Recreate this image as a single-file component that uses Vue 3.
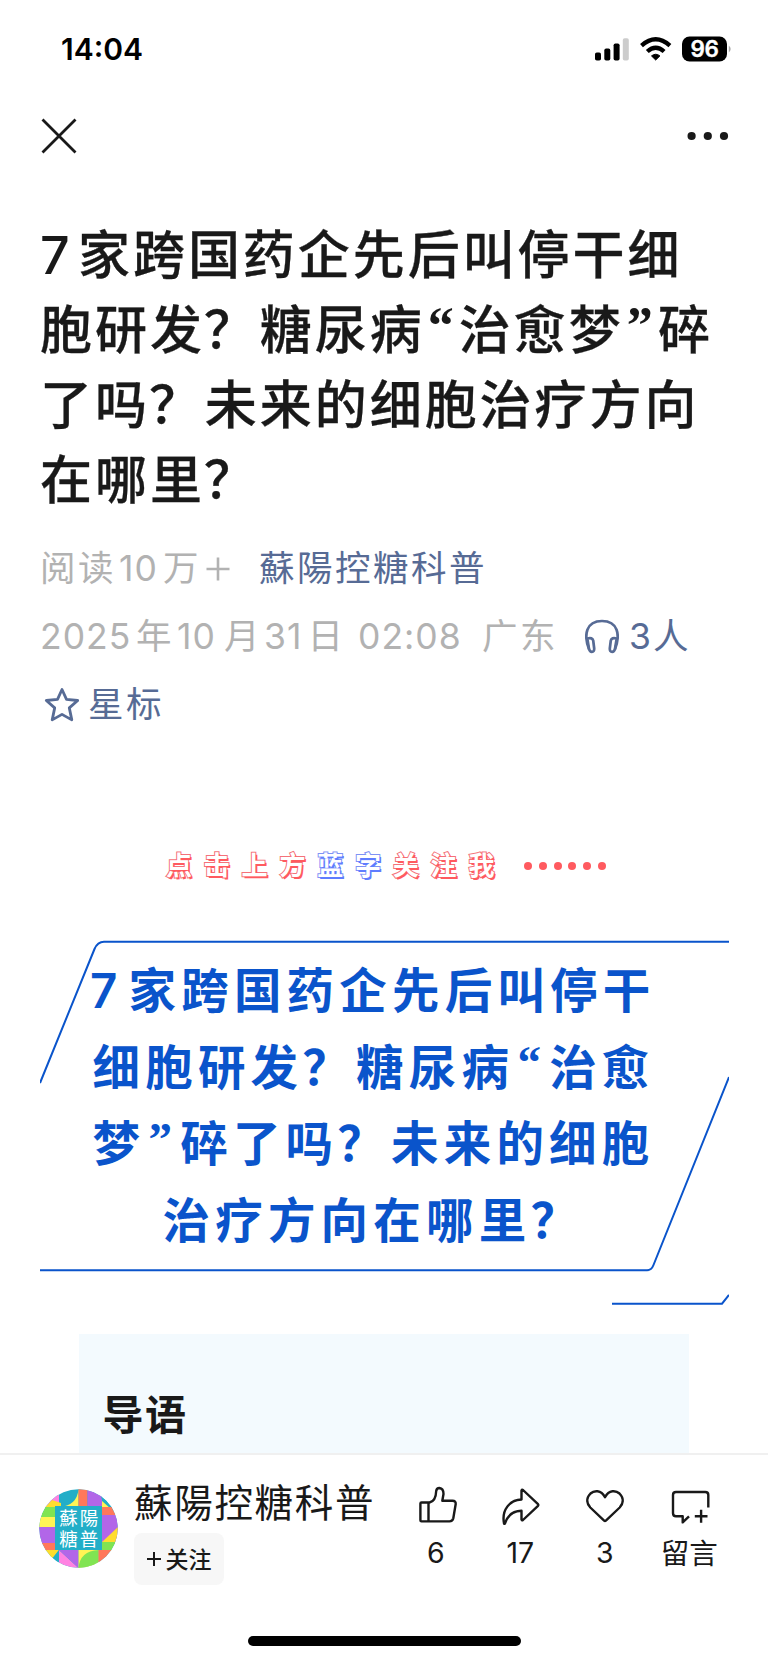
<script setup>
const titleLines = [
  ['7', '家跨国药企先后叫停干细'],
  ['胞研发', '？', '糖尿病', '“', '治愈梦', '”', '碎'],
  ['了吗', '？', '未来的细胞治疗方向'],
  ['在哪里', '？'],
]
const bannerLines = [
  ['7', '家跨国药企先后叫停干'],
  ['细胞研发', '？', '糖尿病', '“', '治愈'],
  ['梦', '”', '碎了吗', '？', '未来的细胞'],
  ['治疗方向在哪里', '？'],
]
const kinds = { '7': 'num', '“': 'quote', '”': 'quote', '？': 'ask' }
const kind = (t) => kinds[t] || 'han'
const followChars = [...'点击上方蓝字关注我']
</script>

<template>
  <div class="page">
    <header class="status">
      <span class="time">14:04</span>
      <svg class="status-icons" width="140" height="30" viewBox="0 0 140 30">
        <rect x="4" y="17.500" width="6" height="8" rx="1.800" />
        <rect x="13.300" y="13.600" width="6" height="11.900" rx="1.800" />
        <rect x="22.600" y="8.400" width="6" height="17.100" rx="1.800" />
        <rect x="31.800" y="3.200" width="6" height="22.300" rx="1.800" fill="#ccc" />
        <g transform="translate(4.700 0)">
          <path d="M60 25 L55.800 20.900 Q60 17.600 64.200 20.900Z" stroke="#000" stroke-width="1" stroke-linejoin="round" />
          <path d="M51.600 16.500 Q60 8.900 68.400 16.500" class="wave" />
          <path d="M45.800 10.600 Q60 -1.900 74.200 10.600" class="wave" />
        </g>
        <rect x="91" y="1.500" width="45" height="25" rx="7.500" />
        <path d="M137.800 10.500 Q141.600 14 137.800 17.500Z" fill="#aaa" />
        <text x="113.500" y="22" text-anchor="middle" class="battery">96</text>
      </svg>
    </header>

    <nav class="nav">
      <svg width="38" height="38" viewBox="0 0 38 38"><path d="M2.500 2.500 L35.500 35.500 M35.500 2.500 L2.500 35.500" stroke="#191919" stroke-width="2.800" /></svg>
      <svg width="42" height="10" viewBox="0 0 42 10" fill="#191919"><circle cx="4.600" cy="5" r="4.100" /><circle cx="20.800" cy="5" r="4.100" /><circle cx="37" cy="5" r="4.100" /></svg>
    </nav>

    <h1 class="title">
      <span v-for="(line, i) in titleLines" :key="i" class="row"><span v-for="(t, j) in line" :key="j" :class="kind(t)">{{ t }}</span></span>
    </h1>

    <section class="meta">
      <div class="row"><span class="m-read">阅读</span><span class="m-ten">10</span><span class="m-wan">万</span><svg class="plus" width="26" height="26" viewBox="0 0 26 26"><path d="M1.500 13H24.500M13 1.500V24.500" stroke="#b2b2b2" stroke-width="2.600" /></svg><span class="link">蘇陽控糖科普</span></div>
      <div class="row">
        <span class="m-year">2025</span><span class="m-nian">年</span><span class="m-month">10</span><span class="m-yue">月</span><span class="m-day">31</span><span class="m-ri">日</span><span class="m-time">02:08</span><span class="m-place">广东</span>
        <svg class="phones" width="34" height="36" viewBox="0 0 34 36" fill="none" stroke="#576b95" stroke-width="2.700" stroke-linejoin="round">
          <path d="M4 30 C-1.500 16 1 2 17 2 S35.500 16 30 30" />
          <path d="M2.300 19.500 Q7.500 18.200 8.200 21.500 L9.200 29.500 Q9.400 32.700 6.800 32.800 Q4.900 32.700 4 30 Z" />
          <path d="M31.700 19.500 Q26.500 18.200 25.800 21.500 L24.800 29.500 Q24.600 32.700 27.200 32.800 Q29.100 32.700 30 30 Z" />
        </svg>
        <span class="link m-three">3</span><span class="link">人</span>
      </div>
      <div class="row">
        <svg class="star" width="36" height="36" viewBox="0 0 36 36"><path d="M18 2.500 L22.500 12.300 L33.700 13.500 L25.300 20.900 L27.800 32.900 L18 27.400 L8.200 32.900 L10.700 20.900 L2.300 13.500 L13.500 12.300 Z" fill="none" stroke="#576b95" stroke-width="2.800" stroke-linejoin="round" /></svg>
        <span class="link">星标</span>
      </div>
    </section>

    <section class="follow">
      <span v-for="(c, i) in followChars" :key="i" class="toy" :class="{ blue: c === '蓝' || c === '字' }">{{ c }}</span>
      <i v-for="n in 6" :key="'d' + n" class="dot"></i>
    </section>

    <section class="banner">
      <svg class="frame" width="689" height="366" viewBox="0 0 689 366" fill="none" stroke="#0a54cb" stroke-width="2">
        <path d="M0 143 L54.500 9 Q57.500 1.700 64 1.700 H689" />
        <path d="M0 330.300 H607 Q611.500 330.300 613.500 325 L689 137" />
        <path d="M572 363.700 H682 L689 355" />
      </svg>
      <div class="banner-text">
        <span v-for="(line, i) in bannerLines" :key="i" class="row"><span v-for="(t, j) in line" :key="j" :class="kind(t)">{{ t }}</span></span>
      </div>
    </section>

    <section class="intro"><h2>导语</h2></section>

    <footer class="bar">
      <svg class="avatar" width="79" height="79" viewBox="0 0 79 79">
        <defs><clipPath id="disc"><circle cx="39.500" cy="39.500" r="39.200" /></clipPath></defs>
        <g clip-path="url(#disc)">
          <rect width="79" height="79" fill="#22aec8" />
          <path d="M0 0H20V18H0Z" fill="#ff82e2" /><path d="M13 11L0 24V18H22V14Z" fill="#ffdd2e" />
          <path d="M20 18Q38 17 39.500 0V18Z" fill="#fff455" />
          <rect x="39.500" width="9" height="18" fill="#ff785a" /><rect x="48.500" width="14.500" height="18" fill="#b266e8" />
          <path d="M60 0L79 22H66Z" fill="#22aec8" /><path d="M63 12L72 20H63Z" fill="#fff455" />
          <rect y="18" width="17" height="10" fill="#80e452" /><rect y="28" width="17" height="10" fill="#fff455" />
          <rect y="38" width="17" height="16" fill="#b266e8" /><rect y="54" width="17" height="7" fill="#ff785a" />
          <rect x="63" y="18" width="16" height="8" fill="#ff785a" /><rect x="63" y="26" width="16" height="27" fill="#b266e8" />
          <path d="M79 38V53H63Z" fill="#ffdd2e" /><rect x="63" y="53" width="16" height="9" fill="#80e452" />
          <path d="M0 61H20L6 79H0Z" fill="#ffdd2e" /><path d="M20 61V79H6Z" fill="#22aec8" />
          <path d="M20 61V79H39.500Z" fill="#ff82e2" /><path d="M20 61H39.500V79Z" fill="#b266e8" />
          <rect x="39.500" y="61" width="20" height="18" fill="#fff455" /><path d="M39.500 79Q41 62 59.500 61V79Z" fill="#80e452" />
          <path d="M59.500 61H79L59.500 79Z" fill="#ff785a" />
          <rect x="16" y="17" width="47" height="44" fill="#22aec8" />
          <text x="20.300" y="36.300" textLength="39">蘇陽</text><text x="20.300" y="57" textLength="39">糖普</text>
        </g>
      </svg>
      <div class="who">
        <div class="name">蘇陽控糖科普</div>
        <div class="btn"><svg width="14" height="14" viewBox="0 0 14 14"><path d="M0 7H14M7 0V14" stroke="#191919" stroke-width="2" /></svg><span>关注</span></div>
      </div>
      <div class="acts">
        <div class="act thumb">
          <svg width="40" height="40" viewBox="0 0 40 40"><path d="M3.500 17.500 H11.500 C17 16.500 18 11 18.200 6 Q18.600 3 21.400 3 Q25.500 3.400 25.500 9 L24.300 15.800 H34.500 Q38 16 37.700 19 L35.300 33.300 Q34.600 36.400 31.500 36.400 H3.500 Q2.400 36.400 2.400 35.300 V18.600 Q2.400 17.500 3.500 17.500 Z M10.500 17.500 V36.400" /></svg>
          <span>6</span>
        </div>
        <div class="act share">
          <svg width="40" height="40" viewBox="0 0 40 40"><path d="M20.500 14.500 V5.400 Q21 4.300 22 5 L37 19.200 Q37.600 20 37 20.800 L22 35 Q20.800 35.800 20.500 34.500 V25.800 C11 26 6.500 30.500 4 38.500 Q3.300 39.300 3 38.300 C0.500 25 8.500 15 20.500 14.500 Z" /></svg>
          <span>17</span>
        </div>
        <div class="act">
          <svg width="40" height="40" viewBox="0 0 40 40"><path d="M20 12.200 C24 4.500 31 5.300 34.500 8.500 C39.500 13.500 38 19 34.700 22.500 L20.900 35.600 Q20 36.300 19.100 35.600 L5.300 22.500 C2 19 0.500 13.500 5.500 8.500 C9 5.300 16 4.500 20 12.200 Z" /></svg>
          <span>3</span>
        </div>
        <div class="act talk">
          <svg width="40" height="40" viewBox="0 0 40 40"><path d="M38.300 22.500 V10 Q38.300 7 35.300 7 H6 Q3 7 3 10 V28.300 Q3 31.300 6 31.300 H12.700 V37.400 L19 31.300 M24.800 31.300 H37.500 M31.100 24.800 V37.800" /></svg>
          <span>留言</span>
        </div>
      </div>
    </footer>
    <div class="home"></div>
  </div>
</template>

<style>
body { background: #fff; overflow: hidden; }
</style>

<style scoped>
* { box-sizing: border-box; }
.page {
  width: 768px; height: 1663px; background: #fff; color: #191919; overflow: hidden;
  display: flex; flex-direction: column; white-space: nowrap;
  font-family: Inter, "Noto Sans CJK SC", sans-serif; font-kerning: none;
}
.status { height: 98px; padding: 33px 37px 0 61px; display: flex; justify-content: space-between; align-items: flex-start; color: #000; }
.time { font-size: 30px; line-height: 32px; font-weight: 600; }
.status-icons { margin-top: 1.500px; }
.wave { fill: none; stroke: #000; stroke-width: 4.300; }
.battery { fill: #fff; font-size: 22.500px; font-weight: 600; stroke: #fff; stroke-width: 0.400; letter-spacing: -0.500px; }
.nav { height: 76px; padding: 0 39px 0 40px; display: flex; justify-content: space-between; align-items: center; }
.title { margin: 45px 0 0 40px; font-size: 52px; font-weight: 500; letter-spacing: 2.950px; }
.title .han, .title .ask { -webkit-text-stroke: 0.300px #191919; }
.row { display: flex; align-items: center; }
.title .row { height: 74.900px; line-height: 74.900px; }
.title .num { width: 38px; }
.quote { text-align: center; letter-spacing: 0; font-family: "Liberation Serif", serif; font-weight: 700; }
.title .quote { width: 34.200px; font-size: 52px; margin-top: -9px; text-indent: -2px; }
.ask { text-indent: -1px; margin-right: 1px; }
.meta { margin-top: 16px; padding-left: 40px; font-size: 35.500px; letter-spacing: 2.500px; color: #b2b2b2; }
.meta .row { height: 68px; line-height: 68px; }
.link { color: #576b95; }
.m-read { width: 79px; }
.m-ten { width: 44px; letter-spacing: 1px; }
.m-wan { width: 42px; }
.plus { margin-right: 28px; }
.m-year, .m-month, .m-day, .m-time { letter-spacing: 1px; }
.m-year { width: 96px; }
.m-nian { width: 41px; }
.m-month { width: 47px; }
.m-yue { width: 40px; }
.m-day { width: 43.500px; }
.m-ri { width: 50.500px; }
.m-time { width: 124px; }
.m-place { width: 103px; }
.phones { margin-right: 10px; }
.m-three { width: 24px; letter-spacing: 0; }
.star { margin: 0 8px 0 4px; }
.follow { margin-top: 99px; height: 56px; padding-left: 166px; display: flex; align-items: center; }
.toy { width: 37.800px; font-size: 26px; font-weight: 700; line-height: 40px; color: #fff; -webkit-text-stroke: 2px #f4727a; paint-order: stroke fill; text-shadow: 1.800px 1.600px 0 #ff5a5f; }
.toy.blue { -webkit-text-stroke-color: #7f92f5; text-shadow: 1.800px 1.600px 0 #5f7dff; }
.dot { width: 8px; height: 8px; border-radius: 50%; background: #ff5a5f; margin-right: 6.700px; }
.dot:first-of-type { margin-left: 18px; }
.banner { margin: 46px 0 0 39.500px; height: 366px; position: relative; }
.frame { position: absolute; left: 0; top: 0; }
.banner-text { padding-top: 13.300px; width: 640px; padding-left: 53px; font-size: 47.500px; font-weight: 700; letter-spacing: 5.200px; color: #0a54cb; }
.banner-text .row { height: 76.700px; line-height: 76.700px; }
.banner-text .row:last-child { padding-left: 70px; }
.banner-text .num { width: 38.500px; margin-left: -2.500px; font-weight: 600; }
.banner-text .quote { width: 35px; font-size: 47px; margin-top: -11px; text-indent: -5px; }
.intro { margin: 28px 79px 0; height: 119px; background: #f3fafe; padding: 51.500px 23.500px 0; }
.intro h2 { margin: 0; font-size: 41px; line-height: 60px; letter-spacing: 1.500px; font-weight: 700; }
.bar { height: 183px; border-top: 2px solid #f0f0f0; display: flex; align-items: flex-start; padding-left: 39px; }
.avatar { margin-top: 34px; }
.avatar text { font-size: 18.500px; fill: #fff; font-family: "Noto Sans CJK SC", sans-serif; }
.who { margin-left: 16px; width: 280px; }
.name { margin-top: 21px; font-size: 38.500px; line-height: 54px; letter-spacing: 1.700px; }
.btn { margin-top: 3px; width: 90px; height: 52px; border-radius: 8px; background: #f7f7f7; display: flex; align-items: center; padding: 0 0 1px 12.500px; gap: 5px; font-size: 23px; font-weight: 500; }
.btn svg { margin-top: 2px; }
.acts { display: flex; margin-left: -20.500px; padding-top: 30.500px; }
.act { width: 84.500px; display: flex; flex-direction: column; align-items: center; }
.act svg { fill: none; stroke: #191919; stroke-width: 2.400; stroke-linejoin: round; }
.thumb svg { margin-left: 4px; }
.share svg, .talk svg { margin-left: 2px; }
.act span { margin-top: 8px; font-size: 28.500px; line-height: 40px; }
.talk span { line-height: 41px; }
.home { width: 273px; height: 10px; border-radius: 5px; background: #000; margin: 0 auto; }
</style>
